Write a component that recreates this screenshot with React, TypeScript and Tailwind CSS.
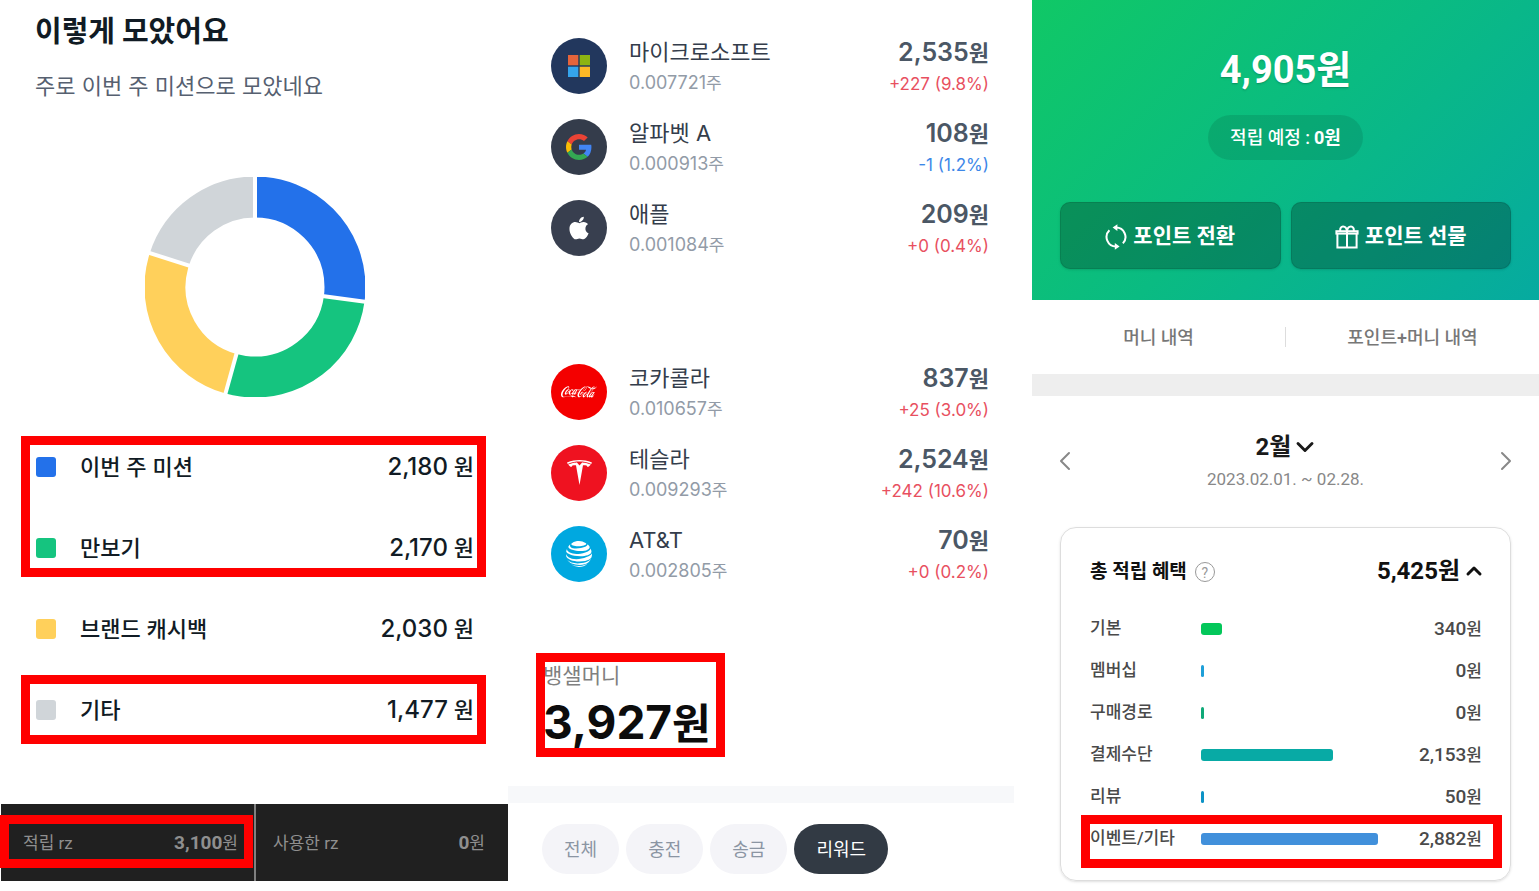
import type { ReactNode } from "react";
import { ChevronDown, ChevronLeft, ChevronRight, ChevronUp } from "lucide-react";
import { FaApple } from "react-icons/fa";
import { SiAtandt, SiCocacola, SiTesla } from "react-icons/si";

const slices = [
  { label: "이번 주 미션", amount: "2,180", stroke: "#2371ea", swatch: "bg-[#2371ea]", start: 0, sweep: 97.6 },
  { label: "만보기", amount: "2,170", stroke: "#15c47f", swatch: "bg-[#15c47f]", start: 97.6, sweep: 97.9 },
  { label: "브랜드 캐시백", amount: "2,030", stroke: "#ffd05b", swatch: "bg-[#ffd05b]", start: 195.5, sweep: 92.4 },
  { label: "기타", amount: "1,477", stroke: "#d0d5d9", swatch: "bg-[#d0d5d9]", start: 287.9, sweep: 72.1 },
];

const stocksTop = [
  { name: "마이크로소프트", shares: "0.007721", price: "2,535", change: "+227 (9.8%)", up: true, bg: "bg-[#22375d]", logo: <MicrosoftLogo /> },
  { name: "알파벳 A", shares: "0.000913", price: "108", change: "-1 (1.2%)", up: false, bg: "bg-[#343c4b]", logo: <GoogleLogo /> },
  { name: "애플", shares: "0.001084", price: "209", change: "+0 (0.4%)", up: true, bg: "bg-[#383f4f]", logo: <FaApple className="h-[26px] w-[26px]" /> },
];

const stocksBottom = [
  { name: "코카콜라", shares: "0.010657", price: "837", change: "+25 (3.0%)", up: true, bg: "bg-[#f40000]", logo: <SiCocacola className="h-9 w-9" /> },
  { name: "테슬라", shares: "0.009293", price: "2,524", change: "+242 (10.6%)", up: true, bg: "bg-[#ef1220]", logo: <SiTesla className="h-[25px] w-[25px]" /> },
  { name: "AT&T", shares: "0.002805", price: "70", change: "+0 (0.2%)", up: true, bg: "bg-[#00a8e0]", logo: <SiAtandt className="h-[26px] w-[26px]" /> },
];

const filters = ["전체", "충전", "송금", "리워드"];

const benefits = [
  { label: "기본", amount: "340", width: 10.5, color: "bg-[#03c75a]" },
  { label: "멤버십", amount: "0", width: 0, color: "bg-[#1e9fd8]" },
  { label: "구매경로", amount: "0", width: 0, color: "bg-[#0fa978]" },
  { label: "결제수단", amount: "2,153", width: 65.5, color: "bg-[#08aaa5]" },
  { label: "리뷰", amount: "50", width: 0, color: "bg-[#0c93c6]" },
];

function Highlight({ className }: { className: string }) {
  return <div aria-hidden="true" className={`pointer-events-none absolute border-[9px] border-[#ff0000] ${className}`} />;
}

function MicrosoftLogo() {
  return (
    <svg viewBox="0 0 22 22" className="h-[22px] w-[22px]">
      <rect width="10.3" height="10.3" fill="#e5643b" />
      <rect x="11.7" width="10.3" height="10.3" fill="#8cb412" />
      <rect y="11.7" width="10.3" height="10.3" fill="#35a4ec" />
      <rect x="11.7" y="11.7" width="10.3" height="10.3" fill="#fcb827" />
    </svg>
  );
}

function GoogleLogo() {
  return (
    <svg viewBox="0 0 48 48" className="h-[26px] w-[26px]">
      <path fill="#ea4335" d="M24 9.5c3.54 0 6.71 1.22 9.21 3.6l6.85-6.85C35.9 2.38 30.47 0 24 0 14.62 0 6.51 5.38 2.56 13.22l7.98 6.19C12.43 13.72 17.74 9.5 24 9.5z" />
      <path fill="#4285f4" d="M46.98 24.55c0-1.57-.15-3.09-.38-4.55H24v9.02h12.94c-.58 2.96-2.26 5.48-4.78 7.18l7.73 6c4.51-4.18 7.09-10.36 7.09-17.65z" />
      <path fill="#fbbc05" d="M10.53 28.59c-.48-1.45-.76-2.99-.76-4.59s.27-3.14.76-4.59l-7.98-6.19C.92 16.46 0 20.12 0 24s.92 7.54 2.56 10.78l7.97-6.19z" />
      <path fill="#34a853" d="M24 48c6.48 0 11.93-2.13 15.89-5.81l-7.73-6c-2.15 1.45-4.92 2.3-8.16 2.3-6.26 0-11.57-4.22-13.47-9.91l-7.98 6.19C6.51 42.62 14.62 48 24 48z" />
    </svg>
  );
}

function SwapIcon() {
  return (
    <svg viewBox="0 0 22 26" className="h-[26px] w-[22px]" fill="none" stroke="currentColor" strokeWidth="2">
      <path d="M11 3.6a9.4 9.4 0 0 1 6.9 15.8" />
      <path d="M4.4 6.3A9.4 9.4 0 0 0 11 22.4" />
      <path d="M7.6 3.6 12.4.2v6.8z" fill="currentColor" stroke="none" />
      <path d="m14.6 22.4-4.8-3.4v6.8z" fill="currentColor" stroke="none" />
    </svg>
  );
}

function GiftIcon() {
  return (
    <svg viewBox="0 0 24 24" className="h-6 w-6" fill="none" stroke="currentColor" strokeWidth="2">
      <rect x="1.4" y="6.2" width="21.2" height="2.4" />
      <path d="M2.4 8.6v14h19.2v-14M12 6.2v16.4" />
      <path d="M12 6.2C11.4.2 4.4-.2 5.2 6.2M12 6.2c.6-6 7.6-6.4 6.8 0" />
    </svg>
  );
}

function DonutChart() {
  return (
    <svg viewBox="-110 -110 220 220" className="h-[220px] w-[220px]" role="img" aria-label="이렇게 모았어요">
      {slices.map((slice) => (
        <circle
          key={slice.label}
          r="90"
          fill="none"
          stroke={slice.stroke}
          strokeWidth="41"
          pathLength={360}
          strokeDasharray={`${slice.sweep} ${360 - slice.sweep}`}
          transform={`rotate(${slice.start - 90})`}
        />
      ))}
      {slices.map((slice) => (
        <line key={slice.label} y1="-66" y2="-112" stroke="#fff" strokeWidth="4" transform={`rotate(${slice.start})`} />
      ))}
    </svg>
  );
}

function SliceRow({ slice }: { slice: (typeof slices)[number] }) {
  return (
    <li className="flex h-[81px] items-center text-[22px] font-medium text-[#111b24]">
      <span className={`h-5 w-5 rounded-[3px] ${slice.swatch}`} />
      <span className="ml-6 pt-0.5">{slice.label}</span>
      <span className="ml-auto pt-0.5">
        <span className="text-2xl">{slice.amount}</span> 원
      </span>
    </li>
  );
}

function SavingsPanel() {
  return (
    <section className="font-[Inter,'Noto_Sans_CJK_KR',sans-serif]">
      <div className="pt-2.5 pr-[34px] pl-[35px]">
        <h1 className="text-[29px] leading-[44px] font-bold text-[#111b24]">이렇게 모았어요</h1>
        <p className="mt-4 text-[22px] leading-8 text-[#566070]">주로 이번 주 미션으로 모았네요</p>
        <div className="mt-[75px] flex justify-center">
          <DonutChart />
        </div>
        <div className="mt-[29px] pl-px">
          <div className="relative">
            <ul>
              <SliceRow slice={slices[0]} />
              <SliceRow slice={slices[1]} />
            </ul>
            <Highlight className="top-[10px] -right-3 bottom-[11px] -left-[15px]" />
          </div>
          <ul>
            <SliceRow slice={slices[2]} />
          </ul>
          <div className="relative">
            <ul>
              <SliceRow slice={slices[3]} />
            </ul>
            <Highlight className="top-[6px] -right-3 bottom-[6px] -left-[15px]" />
          </div>
        </div>
      </div>
      <div className="mt-[54px] ml-px grid h-[77px] grid-cols-[253fr_254fr] bg-[#202020] pt-0.5 font-[Roboto,'Noto_Sans_CJK_KR',sans-serif] text-[17px] text-[#8f8f8f]">
        <div className="relative flex items-center justify-between pr-4 pl-[22px]">
          <span>적립 rz</span>
          <span>
            <b className="text-[19px]">3,100</b>원
          </span>
          <Highlight className="top-[9px] right-px bottom-[13px] -left-px" />
        </div>
        <div className="-mt-0.5 flex items-center justify-between border-l-2 border-[#808080] pt-0.5 pr-[23px] pl-[17px]">
          <span>사용한 rz</span>
          <span>
            <b className="text-[19px]">0</b>원
          </span>
        </div>
      </div>
    </section>
  );
}

function StockRow({ stock }: { stock: (typeof stocksTop)[number] }) {
  return (
    <li className="flex h-[81px] items-center">
      <span className={`grid h-14 w-14 place-items-center rounded-full text-white ${stock.bg}`}>{stock.logo}</span>
      <div className="ml-[22px] pt-[3px]">
        <p className="text-[22px] leading-8 text-[#343d4b]">{stock.name}</p>
        <p className="text-[17px] leading-[30px] text-[#929ba7]">
          <span className="text-lg leading-[30px]">{stock.shares}</span>주
        </p>
      </div>
      <div className="ml-auto pt-[3px] text-right">
        <p className="text-[22px] leading-8 font-semibold text-[#4b5765]">
          <span className="text-[25px] leading-8">{stock.price}</span>원
        </p>
        <p className={`text-[17px] leading-[30px] ${stock.up ? "text-[#e8505f]" : "text-[#3d87e8]"}`}>{stock.change}</p>
      </div>
    </li>
  );
}

function StocksPanel() {
  return (
    <section className="pr-[18px] font-[Inter,'Noto_Sans_CJK_KR',sans-serif]">
      <div className="pt-[25px] pr-[25px] pl-[43px]">
        <ul>
          {stocksTop.map((stock) => (
            <StockRow key={stock.name} stock={stock} />
          ))}
        </ul>
        <ul className="mt-[83px]">
          {stocksBottom.map((stock) => (
            <StockRow key={stock.name} stock={stock} />
          ))}
        </ul>
      </div>
      <div className="relative mt-[59px] ml-7 h-[104px] w-fit pt-[7px] pr-3.5 pl-[7px]">
        <p className="text-[21px] leading-8 text-[#808080]">뱅샐머니</p>
        <p className="text-[42px] leading-[60px] font-bold text-[#0c0c0c]">
          <span className="text-[46px] leading-[60px]">3,927</span>원
        </p>
        <Highlight className="inset-0" />
      </div>
      <div className="mt-[29px] h-[17px] bg-[#f7f8fa]" />
      <div className="mt-[21px] ml-[34px] flex gap-[7px]">
        {filters.map((filter) => (
          <button
            key={filter}
            type="button"
            className={`h-[50px] rounded-full px-[22px] pt-0.5 text-lg ${
              filter === "리워드" ? "bg-[#323a44] text-white" : "bg-[#f4f4f8] text-[#8b95a3]"
            }`}
          >
            {filter}
          </button>
        ))}
      </div>
    </section>
  );
}

function ActionButton({ icon, children }: { icon: ReactNode; children: ReactNode }) {
  return (
    <button
      type="button"
      className="flex h-[67px] flex-1 items-center justify-center gap-1.5 rounded-[10px] border border-black/10 bg-black/25 pt-0.5 text-[21px] font-bold text-white shadow-sm"
    >
      {icon}
      {children}
    </button>
  );
}

function BenefitRow({ label, amount, width, color }: (typeof benefits)[number]) {
  return (
    <li className="flex h-[42px] items-center text-[17px] font-medium text-[#4a4a4a]">
      <span className="w-[111px]">{label}</span>
      <span className="flex-1">
        <span className={`block h-3 min-w-[3px] rounded-[3px] ${color}`} style={{ width: `${width}%` }} />
      </span>
      <span className="w-20 text-right">
        <span className="text-[19px]">{amount}</span>원
      </span>
    </li>
  );
}

function PointsPanel() {
  return (
    <section className="font-[Roboto,'Noto_Sans_CJK_KR',sans-serif]">
      <div className="flex h-[300px] flex-col items-center bg-linear-[135deg,#10c866,#0abb82_50%,#06aaa0] px-7 pt-10">
        <p className="text-[38px] leading-[60px] font-bold text-white text-shadow-sm">4,905원</p>
        <p className="mt-[15px] flex h-[45px] items-center gap-1 rounded-full bg-black/10 px-[22px] text-lg font-medium text-white">
          적립 예정 : <b>0원</b>
        </p>
        <div className="mt-[42px] flex w-full gap-2.5">
          <ActionButton icon={<SwapIcon />}>포인트 전환</ActionButton>
          <ActionButton icon={<GiftIcon />}>포인트 선물</ActionButton>
        </div>
      </div>
      <div className="flex h-[74px] items-center text-lg font-medium text-[#777]">
        <button type="button" className="flex-1 pt-0.5">머니 내역</button>
        <span className="h-5 w-px bg-[#ddd]" />
        <button type="button" className="flex-1 pt-0.5">포인트+머니 내역</button>
      </div>
      <div className="h-[22px] bg-[#eee]" />
      <div className="mt-[33px] flex items-center justify-between px-[17px] text-[#888]">
        <button type="button" aria-label="이전 달">
          <ChevronLeft className="h-8 w-8" strokeWidth={1.5} />
        </button>
        <div className="text-center">
          <button type="button" className="flex w-full items-center justify-center text-2xl leading-9 font-bold text-[#1a1a1a]">
            2월
            <ChevronDown className="-mr-1 h-7 w-7" strokeWidth={2.5} />
          </button>
          <p className="text-[17px] leading-7">2023.02.01. ~ 02.28.</p>
        </div>
        <button type="button" aria-label="다음 달">
          <ChevronRight className="h-8 w-8" strokeWidth={1.5} />
        </button>
      </div>
      <div className="mx-7 mt-[34px] rounded-2xl border border-[#ddd] pt-[22px] pr-7 pb-5 pl-[29px] shadow-sm">
        <div className="flex h-[42px] items-center text-[#111]">
          <h2 className="pt-0.5 text-[19px] font-bold">총 적립 혜택</h2>
          <button
            type="button"
            aria-label="도움말"
            className="mt-0.5 ml-2 grid h-5 w-5 place-items-center rounded-full border border-[#999] text-sm text-[#999]"
          >
            ?
          </button>
          <button type="button" className="ml-auto flex items-center text-2xl font-bold">
            5,425원
            <ChevronUp className="-mr-1 ml-0.5 h-6 w-6" strokeWidth={3} />
          </button>
        </div>
        <ul className="mt-4">
          {benefits.map((benefit) => (
            <BenefitRow key={benefit.label} {...benefit} />
          ))}
        </ul>
        <div className="relative">
          <ul>
            <BenefitRow label="이벤트/기타" amount="2,882" width={88} color="bg-[#4190db]" />
          </ul>
          <Highlight className="-top-[3px] -right-5 -bottom-2 -left-[9px]" />
        </div>
      </div>
    </section>
  );
}

export default function App() {
  return (
    <main className="grid grid-cols-[508fr_524fr_507fr] bg-white pb-2.5">
      <SavingsPanel />
      <StocksPanel />
      <PointsPanel />
    </main>
  );
}
